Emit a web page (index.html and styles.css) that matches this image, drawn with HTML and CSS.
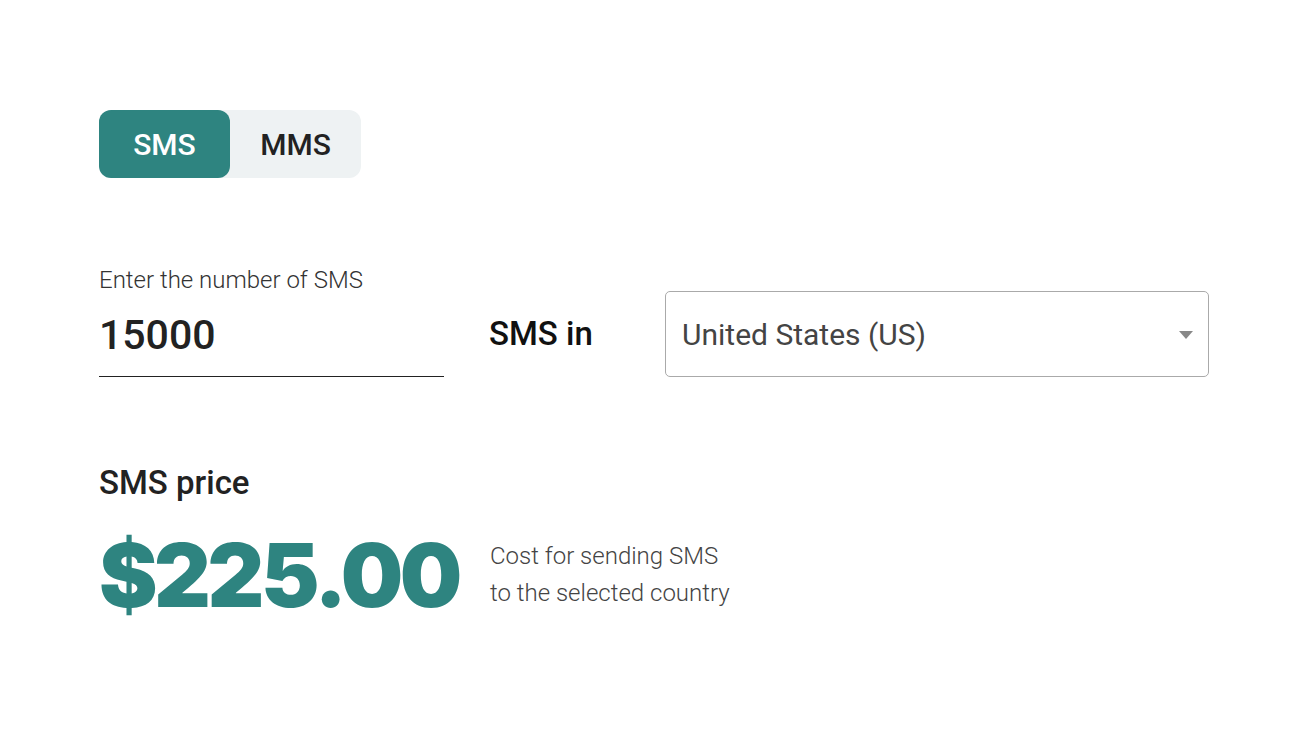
FILE: index.html
```html
<!DOCTYPE html>
<html lang="en">
  <head>
    <meta charset="UTF-8" />
    <title>SMS price calculator</title>
    <link rel="stylesheet" href="styles.css">
  </head>
  <body>
    <div class="calc">
      <!-- SMS / MMS switch -->
      <div class="tabs">
        <button class="tab active">SMS</button>
        <button class="tab">MMS</button>
      </div>

      <!-- Count + country -->
      <div class="form-row">
        <div class="field">
          <label for="count">Enter the number of SMS</label>
          <input id="count" type="text" value="15000" />
        </div>
        <div class="joiner">SMS in</div>
        <div class="select">
          <span>United States (US)</span>
          <span class="caret"></span>
        </div>
      </div>

      <!-- Result -->
      <div class="result">
        <h2>SMS price</h2>
        <div class="price-row">
          <div class="price">$225.00</div>
          <p class="note">Cost for sending SMS<br />to the selected country</p>
        </div>
      </div>
    </div>
  </body>
</html>
```

FILE: styles.css
```css
body {
  margin: 0;
  font-family: Roboto, "Liberation Sans", sans-serif;
  background: #fff;
  color: #222;
}

.calc {
  padding: 110px 99px 0;
  display: flex;
  flex-direction: column;
}

.tabs {
  display: flex;
  width: 262px;
  height: 68px;
  background: #eef2f3;
  border-radius: 12px;
}

.tab {
  font-family: inherit;
  font-size: 30px;
  font-weight: 500;
  border: none;
  background: transparent;
  color: #222;
  flex: 1;
  border-radius: 12px;
  cursor: pointer;
  padding: 0;
}

.tab.active {
  background: #2e8480;
  color: #fff;
  flex: 0 0 131px;
}

.form-row {
  display: flex;
  align-items: flex-end;
  margin-top: 88px;
}

.field {
  width: 345px;
  display: flex;
  flex-direction: column;
}

.field label {
  font-size: 24px;
  font-weight: 300;
  color: #333;
  line-height: 28px;
}

.field input {
  font-family: inherit;
  font-size: 41px;
  font-weight: 500;
  color: #222;
  border: none;
  border-bottom: 1px solid #222;
  padding: 0;
  height: 83px;
  box-sizing: border-box;
  outline: none;
}

.joiner {
  font-size: 33px;
  font-weight: 500;
  color: #111;
  margin-left: 45px;
  width: 176px;
  height: 86px;
  line-height: 86px;
}

.select {
  width: 544px;
  height: 86px;
  box-sizing: border-box;
  border: 1px solid #aaa;
  border-radius: 5px;
  display: flex;
  align-items: center;
  justify-content: space-between;
  padding: 0 15px 0 16px;
  font-size: 30px;
  color: #444;
}

.caret {
  width: 0;
  height: 0;
  border-left: 7px solid transparent;
  border-right: 7px solid transparent;
  border-top: 8px solid #888;
  margin-top: 2px;
}

.result {
  margin-top: 86px;
}

.result h2 {
  margin: 0;
  font-size: 33px;
  font-weight: 500;
  color: #222;
  line-height: 40px;
}

.price-row {
  display: flex;
  align-items: center;
  margin-top: 17px;
}

.price {
  font-family: Inter, Roboto, sans-serif;
  font-size: 88px;
  font-weight: 900;
  color: #2e8480;
  letter-spacing: -3.5px;
  line-height: 110px;
  width: 391px;
}

.note {
  margin: 0;
  font-size: 24px;
  font-weight: 300;
  color: #444;
  line-height: 37px;
}
```
